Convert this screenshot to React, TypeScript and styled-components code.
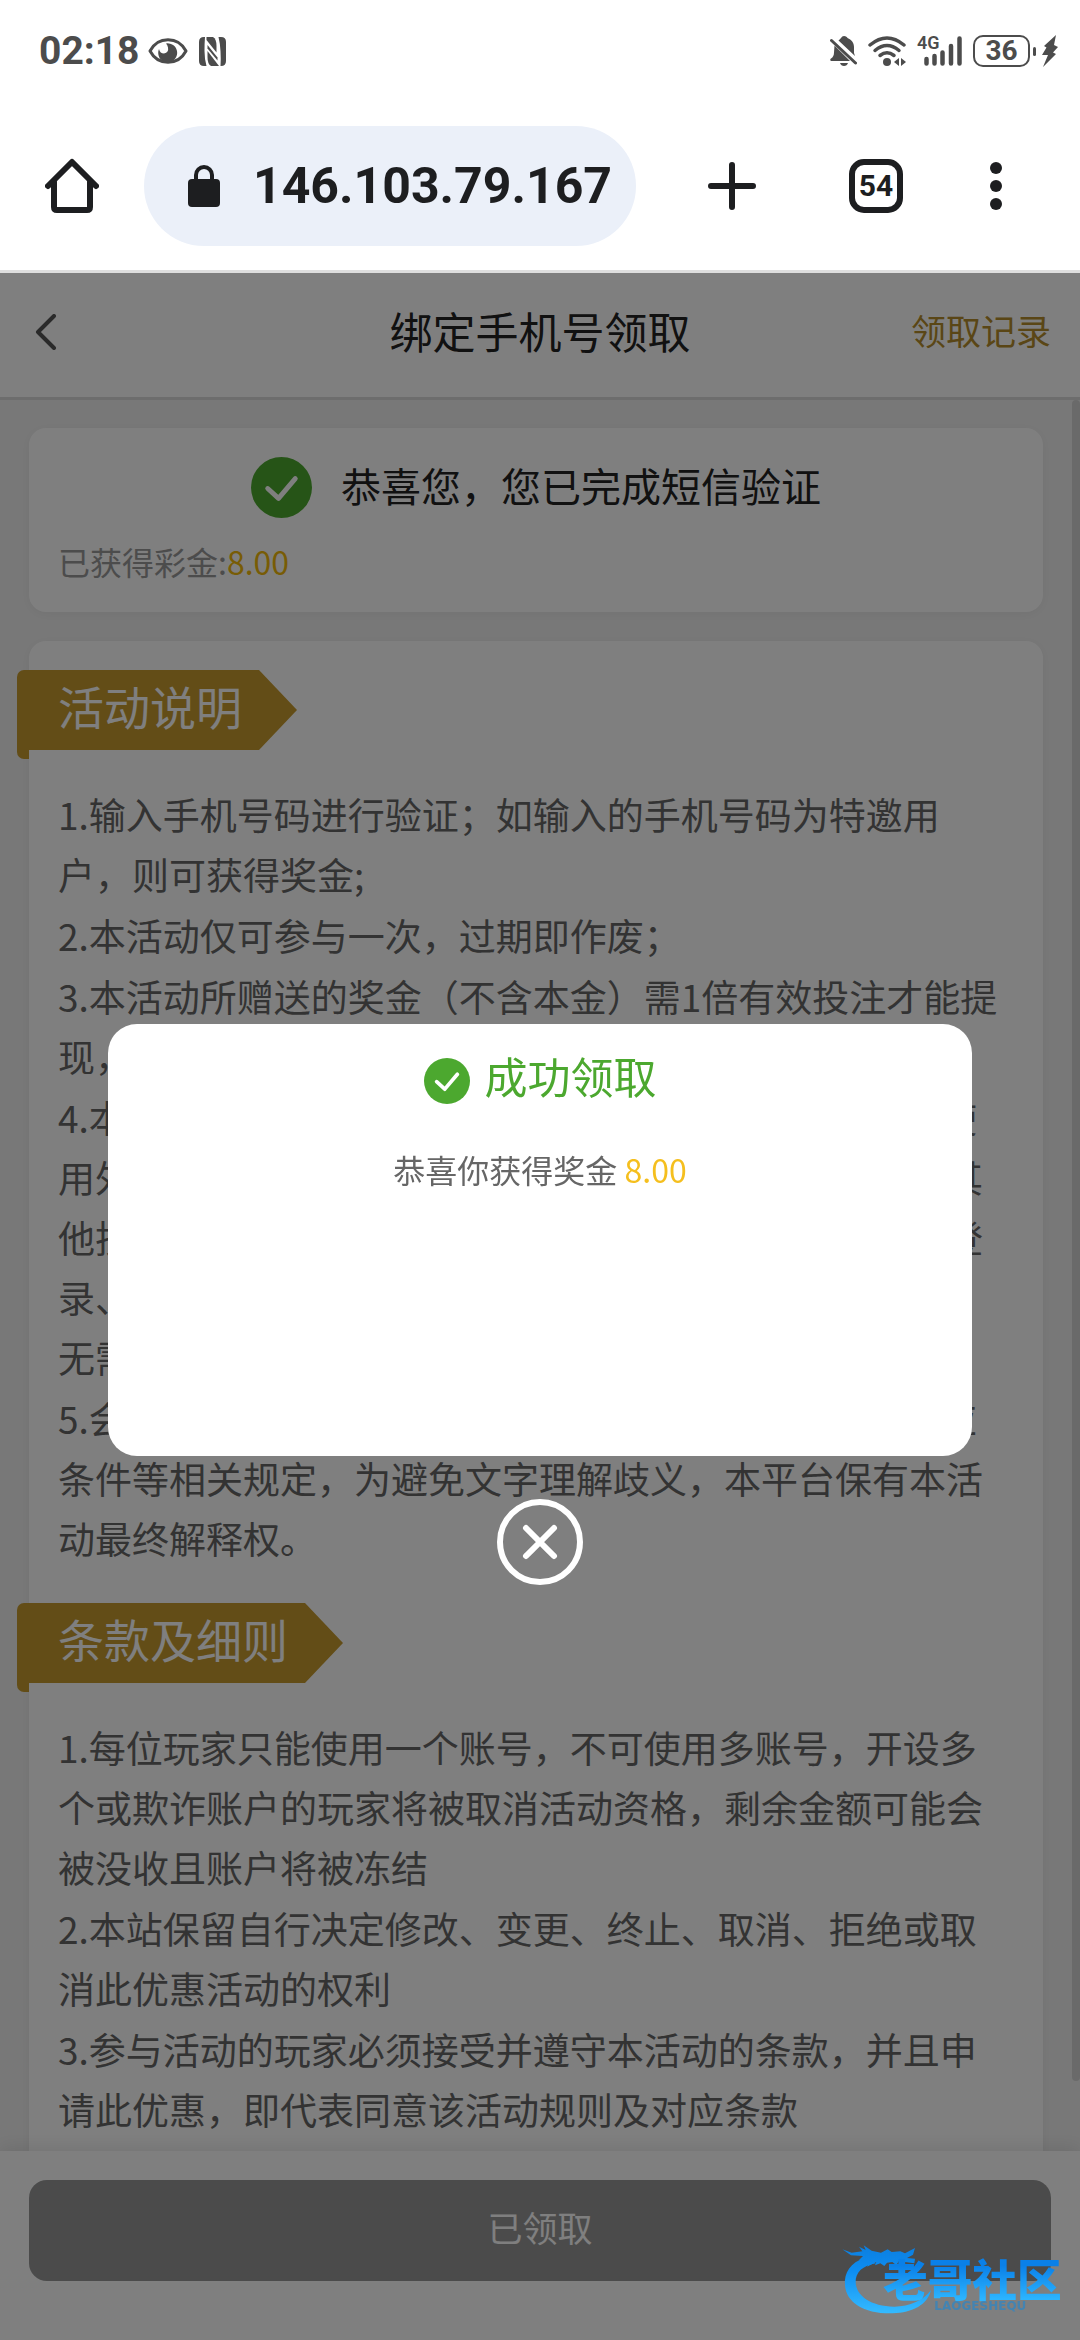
import React from 'react';
import styled, { createGlobalStyle } from 'styled-components';

const GlobalStyle = createGlobalStyle`
  *, *::before, *::after { box-sizing: border-box; }
  body { margin: 0; background: #fff; font-family: "Noto Sans CJK SC", sans-serif; }
  button, input { font: inherit; color: inherit; border: 0; background: none; padding: 0; margin: 0; }
  h1, h2, p, ol { margin: 0; padding: 0; font-weight: 400; }
  svg { display: block; flex: none; }
`;

const Screen = styled.div`
  display: flex;
  flex-direction: column;
  height: 100vh;
`;

/* ---------- device status bar ---------- */

const StatusBar = styled.div`
  display: flex;
  align-items: center;
  flex: none;
  height: 102px;
  padding: 0 22px 0 39px;
  color: #4c4c4c;
  font-family: Roboto, "Liberation Sans", sans-serif;
`;

const Clock = styled.span`
  font-size: 39px;
  font-weight: 700;
  line-height: 48px;
  margin-right: 8px;
`;

const StatusGroup = styled.div<{ $gap: number }>`
  display: flex;
  align-items: center;
  gap: ${(p) => p.$gap}px;
`;

const Spacer = styled.div`
  flex: 1;
`;

const Signal = styled.div`
  position: relative;
  display: flex;
  justify-content: flex-end;
  width: 45px;
`;

const SignalLabel = styled.span`
  position: absolute;
  left: 0;
  top: -3px;
  font-size: 18px;
  font-weight: 600;
  line-height: 20px;
`;

const Battery = styled.div`
  display: flex;
  align-items: center;
  gap: 3px;

  &::after {
    content: '';
    width: 3px;
    height: 9px;
    border-radius: 2px;
    background: currentColor;
  }
`;

const BatteryBody = styled.span`
  width: 57px;
  height: 32px;
  border: 2px solid currentColor;
  border-radius: 10px;
  font-size: 28px;
  font-weight: 700;
  line-height: 28px;
  text-align: center;
`;

/* ---------- browser toolbar ---------- */

const Toolbar = styled.div`
  display: flex;
  align-items: center;
  flex: none;
  height: 171px;
  padding: 0 36px 0 45px;
  border-bottom: 3px solid #dedede;
  color: #1d1e20;
`;

const ToolButton = styled.button<{ $width: number }>`
  display: flex;
  align-items: center;
  justify-content: center;
  width: ${(p) => p.$width}px;
  height: 96px;
`;

const AddressPill = styled.label`
  display: flex;
  align-items: center;
  flex: 1;
  min-width: 0;
  height: 120px;
  margin: 0 24px 0 45px;
  padding: 0 24px 0 44px;
  gap: 33px;
  border-radius: 60px;
  background: #ebf0f9;
`;

const AddressInput = styled.input`
  flex: 1;
  min-width: 0;
  width: 100%;
  height: 64px;
  outline: none;
  font-family: Roboto, "Liberation Sans", sans-serif;
  font-size: 50px;
  font-weight: 700;
`;

const TabCount = styled.span`
  width: 54px;
  height: 54px;
  border: 6px solid currentColor;
  border-radius: 15px;
  font-family: Roboto, "Liberation Sans", sans-serif;
  font-size: 30px;
  font-weight: 700;
  line-height: 42px;
  text-align: center;
`;

/* ---------- web page ---------- */

const Page = styled.div`
  position: relative;
  display: flex;
  flex-direction: column;
  flex: 1;
  min-height: 0;
  background: #fff;
`;

const PageHeader = styled.header`
  display: grid;
  grid-template-columns: 1fr auto 1fr;
  align-items: center;
  flex: none;
  height: 127px;
  padding: 0 29px 10px;
  border-bottom: 3px solid #dadada;
`;

const BackButton = styled.button`
  justify-self: start;
  padding: 8px 6px 4px;
  color: #555;
`;

const PageTitle = styled.h1`
  font-size: 43px;
  line-height: 60px;
  color: #222;
`;

const RecordLink = styled.a`
  justify-self: end;
  font-size: 35px;
  line-height: 60px;
  color: #b58d2c;
  text-decoration: none;
`;

const Scroller = styled.main`
  display: flex;
  flex: 1;
  min-height: 0;
  overflow-y: auto;
  scrollbar-width: none;
  background: #f1f1f1;
`;

const Cards = styled.div`
  flex: 1;
  min-width: 0;
  padding: 28px 29px 0;
`;

const ScrollTrack = styled.div`
  position: sticky;
  top: 0;
  flex: none;
  width: 8px;
  height: 100%;
`;

const ScrollThumb = styled.div`
  height: 96%;
  border-radius: 4px;
  background: #d4d4d4;
`;

const Card = styled.section`
  border-radius: 17px;
  background: #fff;
  box-shadow: 0 2px 12px rgba(0, 0, 0, 0.05);

  & + & { margin-top: 29px; }
`;

const ResultCard = styled(Card)`
  display: flex;
  flex-direction: column;
  gap: 16px;
  padding: 29px 29px 24px;
`;

const ResultRow = styled.div`
  display: flex;
  align-items: flex-start;
  justify-content: center;
  gap: 29px;
`;

const ResultTitle = styled.h2`
  font-size: 40px;
  line-height: 56px;
  color: #222;
`;

const BonusLine = styled.p`
  font-size: 32px;
  line-height: 54px;
  color: #999;
`;

const Amount = styled.strong<{ $color: string }>`
  font-weight: 400;
  color: ${(p) => p.$color};
`;

const RulesCard = styled(Card)`
  padding: 29px 30px 35px 29px;
`;

const Ribbon = styled.h2`
  position: relative;
  width: max-content;
  height: 80px;
  margin-left: -41px;
  padding: 0 55px 0 41px;
  font-size: 46px;
  line-height: 71px;
  color: #fff;
  isolation: isolate;

  &::before {
    content: '';
    position: absolute;
    inset: 0;
    z-index: -1;
    border-radius: 7px 0 0 0;
    background: #c69a2e;
    clip-path: polygon(0 0, calc(100% - 38px) 0, 100% 50%, calc(100% - 38px) 100%, 0 100%);
  }

  &::after {
    content: '';
    position: absolute;
    left: 0;
    top: 100%;
    z-index: -1;
    width: 12px;
    height: 9px;
    border-radius: 0 0 0 7px;
    background: #c69a2e;
  }
`;

const RuleList = styled.ol`
  display: flex;
  flex-direction: column;
  gap: 1px;
  padding: 34px 0 35px;
  list-style: none;
  font-size: 37px;
  line-height: 60px;
  color: #666;
`;

const PageFooter = styled.footer`
  position: relative;
  flex: none;
  padding: 29px 29px 59px;
  background: #fff;
  box-shadow: 0 -3px 18px rgba(0, 0, 0, 0.1);
`;

const ClaimedButton = styled.button`
  display: block;
  width: 100%;
  height: 101px;
  padding-bottom: 8px;
  border-radius: 18px;
  background: #969696;
  color: #fff;
  font-size: 35px;
`;

/* ---------- dialog ---------- */

const Overlay = styled.div`
  position: absolute;
  inset: 0;
  display: flex;
  flex-direction: column;
  align-items: center;
  justify-content: center;
  gap: 43px;
  padding-bottom: 4px;
  background: rgba(0, 0, 0, 0.5);
`;

const Dialog = styled.div`
  display: flex;
  flex-direction: column;
  align-items: center;
  gap: 38px;
  width: 80%;
  aspect-ratio: 2 / 1;
  padding-top: 22px;
  border-radius: 29px;
  background: #fff;
`;

const DialogTitle = styled.h2`
  display: flex;
  align-items: flex-end;
  gap: 15px;
  font-size: 43px;
  line-height: 58px;
  color: #4ca82f;
`;

const DialogText = styled.p`
  font-size: 32px;
  line-height: 54px;
  color: #666;
`;

const CloseButton = styled.button`
  display: block;
  border-radius: 50%;
`;

const Watermark = styled.svg`
  position: fixed;
  right: 13px;
  bottom: 24px;
  pointer-events: none;
`;

/* ---------- icons ---------- */

const CheckBadge = ({ size }: { size: number }) => (
  <svg width={size} height={size} viewBox="0 0 62 62" aria-hidden="true">
    <circle cx="31" cy="31" r="31" fill="#4ca82f" />
    <path d="M17 32l11 10 17-20" fill="none" stroke="#fff" strokeWidth="5" strokeLinecap="round" strokeLinejoin="round" />
  </svg>
);

const EyeIcon = () => (
  <svg width="40" height="28" viewBox="0 0 40 28" aria-hidden="true">
    <path d="M2 14C10-1 30-1 38 14C30 29 10 29 2 14z" fill="none" stroke="currentColor" strokeWidth="3" strokeLinejoin="round" />
    <path d="M18 6.500a9.500 9.500 0 1 1-7 5.500q1 4.500 5 4.500 5-1 4-6-.5-2.500-2-4z" fill="currentColor" />
  </svg>
);

const NfcIcon = () => (
  <svg width="27" height="29" viewBox="0 0 27 29" aria-hidden="true">
    <g fill="currentColor">
      <path d="M5 0Q0 0 0 5v19q0 5 5 5h2.500Q5.500 22 5.500 14T6 0z" />
      <path d="M7.500 0H14q3.500 2 3.500 9v6.500L7.500 3z" />
      <path d="M8.500 8l10 12.500v3L8.500 11.500z" />
      <path d="M8.500 14L20 29h-8q-3.500-2-3.500-9z" />
      <path d="M19.500 0H22q5 0 5 5v19q0 5-5 5h-.500Q22 22 21.500 14T19.500 0z" />
    </g>
  </svg>
);

const BellOffIcon = () => (
  <svg width="27" height="30" viewBox="0 0 27 30" aria-hidden="true">
    <path d="M14 0c2 0 3 1 3.500 2 4 1.500 6.500 5 6.500 9v6l1 3L8.500 4.500Q10 3 11 2q1-2 3-2z" fill="currentColor" />
    <path d="M4.500 9.500L20 25H1q-1.500-1.500 0-2.500 3-2 3-6z" fill="currentColor" />
    <path d="M10 27h8q-1 3-4 3t-4-3z" fill="currentColor" />
    <path d="M1.500 4.500l24 22.500" stroke="currentColor" strokeWidth="3" strokeLinecap="round" />
  </svg>
);

const WifiIcon = () => (
  <svg width="38" height="30" viewBox="0 0 38 30" aria-hidden="true">
    <g fill="none" stroke="currentColor" strokeWidth="3.500" strokeLinecap="round">
      <path d="M2 9Q19-5 36 9" />
      <path d="M7 14.500Q19 4.500 31 14.500" />
      <path d="M12 19.500Q19 14 26 19.500" />
    </g>
    <circle cx="19" cy="26" r="4" fill="currentColor" />
    <path d="M31 22v8l-5-4zM33 22v8l5-4z" fill="currentColor" />
  </svg>
);

const SignalBars = () => (
  <svg width="38" height="30" viewBox="0 0 38 30" aria-hidden="true">
    <g stroke="currentColor" strokeWidth="4.500" strokeLinecap="round">
      <path d="M2.500 23v4.500M10.500 20v7.500M18.500 16.500v11M27 10v17.500M35.500 2.500v25" />
    </g>
  </svg>
);

const BoltIcon = () => (
  <svg width="16" height="32" viewBox="0 0 16 32" aria-hidden="true">
    <path d="M14 0L2 11l2.500 1.500L0 20h6L1 32 14 19l-3-1.500L16 12l-4-2z" fill="currentColor" />
  </svg>
);

const HomeIcon = () => (
  <svg width="54" height="56" viewBox="0 0 54 56" aria-hidden="true">
    <g fill="none" stroke="currentColor" strokeWidth="6" strokeLinecap="round" strokeLinejoin="round">
      <path d="M3 28L27 4l24 24" />
      <path d="M9 24v25q0 3 3 3h30q3 0 3-3V24" />
    </g>
  </svg>
);

const LockIcon = () => (
  <svg width="32" height="42" viewBox="0 0 32 42" aria-hidden="true">
    <rect x="0" y="14" width="32" height="28" rx="4" fill="currentColor" />
    <path d="M8 16V10a8 8 0 0 1 16 0v6" fill="none" stroke="currentColor" strokeWidth="4" />
  </svg>
);

const PlusIcon = () => (
  <svg width="48" height="48" viewBox="0 0 48 48" aria-hidden="true">
    <path d="M3 24h42M24 3v42" stroke="currentColor" strokeWidth="6" strokeLinecap="round" />
  </svg>
);

const MenuIcon = () => (
  <svg width="12" height="48" viewBox="0 0 12 48" aria-hidden="true">
    <g fill="currentColor">
      <circle cx="6" cy="6" r="6" />
      <circle cx="6" cy="24" r="6" />
      <circle cx="6" cy="42" r="6" />
    </g>
  </svg>
);

const BackIcon = () => (
  <svg width="22" height="36" viewBox="0 0 22 36" aria-hidden="true">
    <path d="M19 2L3 18l16 16" fill="none" stroke="currentColor" strokeWidth="4" strokeLinecap="round" strokeLinejoin="round" />
  </svg>
);

const CloseIcon = () => (
  <svg width="86" height="86" viewBox="0 0 86 86" aria-hidden="true">
    <circle cx="43" cy="43" r="40" fill="none" stroke="#fff" strokeWidth="6" />
    <path d="M29 29l28 28M57 29L29 57" stroke="#fff" strokeWidth="6" strokeLinecap="round" />
  </svg>
);

const CommunityLogo = () => (
  <Watermark width="226" height="72" viewBox="30 40 678 216" role="img" aria-label="老哥社区">
    <defs>
      <linearGradient id="dragonBlue" gradientUnits="userSpaceOnUse" x1="0" y1="50" x2="0" y2="250">
        <stop offset="0" stopColor="#0c7fe0" />
        <stop offset="0.350" stopColor="#0d8df2" />
        <stop offset="1" stopColor="#35bbff" />
      </linearGradient>
      <linearGradient id="letterBlue" gradientUnits="userSpaceOnUse" x1="0" y1="105" x2="0" y2="205">
        <stop offset="0" stopColor="#0a80e8" />
        <stop offset="1" stopColor="#2cb4ff" />
      </linearGradient>
    </defs>
    <g fill="url(#dragonBlue)">
      <path d="M100 82C60 95 38 125 42 165C46 215 100 250 185 248C245 246 290 222 300 178C280 208 235 228 190 228C120 228 75 195 74 155C73 125 95 105 135 98z" />
      <path d="M34 56L62 66L94 62L84 48L104 58L98 44L122 60L150 66L170 56L182 64L208 62L222 68L252 52L246 72L228 82L252 84L250 98L222 94L204 90L196 104L184 94L168 96L160 106L148 98L132 104L136 94L108 108L118 92L84 88L96 76L60 74z" />
    </g>
    <text x="156" y="200" fontFamily="Noto Sans CJK SC, sans-serif" fontSize="134" fontWeight="900" fill="url(#letterBlue)">老哥社区</text>
    <text x="310" y="238" fontFamily="DejaVu Sans, sans-serif" fontSize="36" fontWeight="700" fill="#2a86c8" fillOpacity="0.700">LAOGESHEQU</text>
  </Watermark>
);

/* ---------- content ---------- */

const ACTIVITY_RULES = [
  '1.输入手机号码进行验证；如输入的手机号码为特邀用户，则可获得奖金;',
  '2.本活动仅可参与一次，过期即作废；',
  '3.本活动所赠送的奖金（不含本金）需1倍有效投注才能提现，投注不限游戏平台；',
  '4.本活动仅限账号所有人进行正常人为操作，禁止租借使用外挂、机器人、不同账号对赌、互刷、套利、接口及其他技术手段参与，否则将取消或扣除奖励、限制账号的登录、冻结账号、甚至拉入黑名单，本平台作出以上处理，无需另行通知会员；',
  '5.会员领取活动奖励时，即视为同意并遵守本活动的对应条件等相关规定，为避免文字理解歧义，本平台保有本活动最终解释权。',
];

const TERMS = [
  '1.每位玩家只能使用一个账号，不可使用多账号，开设多个或欺诈账户的玩家将被取消活动资格，剩余金额可能会被没收且账户将被冻结',
  '2.本站保留自行决定修改、变更、终止、取消、拒绝或取消此优惠活动的权利',
  '3.参与活动的玩家必须接受并遵守本活动的条款，并且申请此优惠，即代表同意该活动规则及对应条款',
];

const Rules = ({ title, items }: { title: string; items: string[] }) => (
  <>
    <Ribbon>{title}</Ribbon>
    <RuleList>
      {items.map((item) => (
        <li key={item}>{item}</li>
      ))}
    </RuleList>
  </>
);

export default function App() {
  return (
    <Screen>
      <GlobalStyle />
      <StatusBar>
        <Clock>02:18</Clock>
        <StatusGroup $gap={11}>
          <EyeIcon />
          <NfcIcon />
        </StatusGroup>
        <Spacer />
        <StatusGroup $gap={11}>
          <BellOffIcon />
          <WifiIcon />
          <Signal>
            <SignalLabel>4G</SignalLabel>
            <SignalBars />
          </Signal>
          <StatusGroup $gap={6}>
            <Battery>
              <BatteryBody>36</BatteryBody>
            </Battery>
            <BoltIcon />
          </StatusGroup>
        </StatusGroup>
      </StatusBar>

      <Toolbar>
        <ToolButton $width={54} aria-label="主页">
          <HomeIcon />
        </ToolButton>
        <AddressPill>
          <LockIcon />
          <AddressInput type="text" aria-label="网址" defaultValue="146.103.79.167." />
        </AddressPill>
        <ToolButton $width={144} aria-label="新标签页">
          <PlusIcon />
        </ToolButton>
        <ToolButton $width={144} aria-label="标签页">
          <TabCount>54</TabCount>
        </ToolButton>
        <ToolButton $width={96} aria-label="菜单">
          <MenuIcon />
        </ToolButton>
      </Toolbar>

      <Page>
        <PageHeader>
          <BackButton aria-label="返回">
            <BackIcon />
          </BackButton>
          <PageTitle>绑定手机号领取</PageTitle>
          <RecordLink href="#records">领取记录</RecordLink>
        </PageHeader>

        <Scroller>
          <Cards>
            <ResultCard>
              <ResultRow>
                <CheckBadge size={61} />
                <ResultTitle>恭喜您，您已完成短信验证</ResultTitle>
              </ResultRow>
              <BonusLine>
                已获得彩金:<Amount $color="#f0b90b">8.00</Amount>
              </BonusLine>
            </ResultCard>
            <RulesCard>
              <Rules title="活动说明" items={ACTIVITY_RULES} />
              <Rules title="条款及细则" items={TERMS} />
            </RulesCard>
          </Cards>
          <ScrollTrack aria-hidden="true">
            <ScrollThumb />
          </ScrollTrack>
        </Scroller>

        <PageFooter>
          <ClaimedButton>已领取</ClaimedButton>
        </PageFooter>

        <Overlay>
          <Dialog role="dialog" aria-modal="true" aria-labelledby="claim-title">
            <DialogTitle id="claim-title">
              <CheckBadge size={46} />
              成功领取
            </DialogTitle>
            <DialogText>
              恭喜你获得奖金 <Amount $color="#f5bf1e">8.00</Amount>
            </DialogText>
          </Dialog>
          <CloseButton aria-label="关闭">
            <CloseIcon />
          </CloseButton>
        </Overlay>
      </Page>
      <CommunityLogo />
    </Screen>
  );
}
